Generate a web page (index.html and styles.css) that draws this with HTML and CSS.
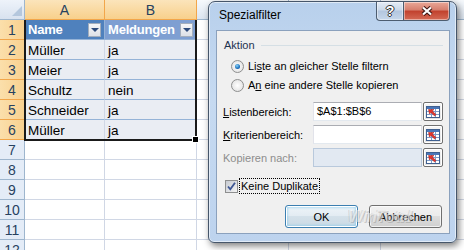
FILE: index.html
```html
<!DOCTYPE html>
<html lang="de">
<head>
    <meta charset="UTF-8">
    <title>Spezialfilter</title>
    <link rel="stylesheet" href="styles.css">
</head>
<body>
    <div class="sheet">
        <div class="corner"></div>
        <div class="ch on">A</div>
        <div class="ch on">B</div>
        <div class="ch">C</div>
        <div class="ch">D</div>
        <div class="ch">E</div>

        <div class="rh on">1</div>
        <div class="cell head">Name<span class="dd"></span></div>
        <div class="cell head shade">Meldungen<span class="dd"></span></div>
        <div class="cell"></div><div class="cell"></div><div class="cell"></div>

        <div class="rh on">2</div>
        <div class="cell data">Müller</div>
        <div class="cell data">ja</div>
        <div class="cell"></div><div class="cell"></div><div class="cell"></div>

        <div class="rh on">3</div>
        <div class="cell data">Meier</div>
        <div class="cell data">ja</div>
        <div class="cell"></div><div class="cell"></div><div class="cell"></div>

        <div class="rh on">4</div>
        <div class="cell data">Schultz</div>
        <div class="cell data">nein</div>
        <div class="cell"></div><div class="cell"></div><div class="cell"></div>

        <div class="rh on">5</div>
        <div class="cell data">Schneider</div>
        <div class="cell data">ja</div>
        <div class="cell"></div><div class="cell"></div><div class="cell"></div>

        <div class="rh on">6</div>
        <div class="cell data">Müller</div>
        <div class="cell data">ja</div>
        <div class="cell"></div><div class="cell"></div><div class="cell"></div>

        <div class="rh">7</div>
        <div class="cell"></div><div class="cell"></div><div class="cell"></div><div class="cell"></div><div class="cell"></div>
        <div class="rh">8</div>
        <div class="cell"></div><div class="cell"></div><div class="cell"></div><div class="cell"></div><div class="cell"></div>
        <div class="rh">9</div>
        <div class="cell"></div><div class="cell"></div><div class="cell"></div><div class="cell"></div><div class="cell"></div>
        <div class="rh">10</div>
        <div class="cell"></div><div class="cell"></div><div class="cell"></div><div class="cell"></div><div class="cell"></div>
        <div class="rh">11</div>
        <div class="cell"></div><div class="cell"></div><div class="cell"></div><div class="cell"></div><div class="cell"></div>
        <div class="rh">12</div>
        <div class="cell"></div><div class="cell"></div><div class="cell"></div><div class="cell"></div><div class="cell"></div>
    </div>

    <!-- selection border around A1:B6 -->
    <div class="sel"><span class="handle"></span></div>

    <div class="dialog">
        <div class="titlebar">
            <span class="title">Spezialfilter</span>
            <div class="tbtns">
                <span class="tb help">?</span>
                <span class="tb close">
                    <svg width="14" height="10" viewBox="0 0 14 10">
                        <path d="M3 1.5L11 8.5M11 1.5L3 8.5" stroke="#3b1511" stroke-width="4.2" fill="none"/>
                        <path d="M3 1.5L11 8.5M11 1.5L3 8.5" stroke="#fff" stroke-width="2.2" fill="none"/>
                    </svg>
                </span>
            </div>
        </div>

        <div class="panel">
            <div class="group"><span>Aktion</span><span class="line"></span></div>

            <div class="radio first"><span class="rb on"></span><span>Li<u>s</u>te an gleicher Stelle filtern</span></div>
            <div class="radio"><span class="rb"></span><span>A<u>n</u> eine andere Stelle kopieren</span></div>

            <div class="field first">
                <span class="lbl"><u>L</u>istenbereich:</span>
                <span class="inp">$A$1:$B$6</span>
                <span class="pick">
                    <svg width="14" height="12" viewBox="0 0 14 12">
                        <rect x="0.5" y="0.5" width="13" height="11" fill="#fff" stroke="#3f5f8f"/>
                        <rect x="1" y="1" width="12" height="2" fill="#4a76b8"/>
                        <path d="M1 5.5H13M1 8.5H13M5.5 3V11M9.5 3V11" stroke="#7d9bc7" fill="none"/>
                        <path d="M2.5 3.5H8L6.4 5.1L10 8.6L8.6 10L5 6.5L3.5 8Z" fill="#e2332b" stroke="#a01a14" stroke-width="0.5"/>
                    </svg>
                </span>
            </div>
            <div class="field">
                <span class="lbl"><u>K</u>riterienbereich:</span>
                <span class="inp"></span>
                <span class="pick">
                    <svg width="14" height="12" viewBox="0 0 14 12">
                        <rect x="0.5" y="0.5" width="13" height="11" fill="#fff" stroke="#3f5f8f"/>
                        <rect x="1" y="1" width="12" height="2" fill="#4a76b8"/>
                        <path d="M1 5.5H13M1 8.5H13M5.5 3V11M9.5 3V11" stroke="#7d9bc7" fill="none"/>
                        <path d="M2.5 3.5H8L6.4 5.1L10 8.6L8.6 10L5 6.5L3.5 8Z" fill="#e2332b" stroke="#a01a14" stroke-width="0.5"/>
                    </svg>
                </span>
            </div>
            <div class="field off">
                <span class="lbl">Kopieren nach:</span>
                <span class="inp"></span>
                <span class="pick">
                    <svg width="14" height="12" viewBox="0 0 14 12">
                        <rect x="0.5" y="0.5" width="13" height="11" fill="#fff" stroke="#3f5f8f"/>
                        <rect x="1" y="1" width="12" height="2" fill="#4a76b8"/>
                        <path d="M1 5.5H13M1 8.5H13M5.5 3V11M9.5 3V11" stroke="#7d9bc7" fill="none"/>
                        <path d="M2.5 3.5H8L6.4 5.1L10 8.6L8.6 10L5 6.5L3.5 8Z" fill="#e2332b" stroke="#a01a14" stroke-width="0.5"/>
                    </svg>
                </span>
            </div>

            <div class="check">
                <span class="box">
                    <svg width="11" height="11" viewBox="0 0 11 11">
                        <path d="M2 5.5L4.3 8.3L9 1.8" stroke="#3d5694" stroke-width="1.8" fill="none"/>
                    </svg>
                </span>
                <span class="focus">Keine Duplikate</span>
            </div>

            <div class="buttons">
                <button class="btn def">OK</button>
                <button class="btn">Abbrechen</button>
            </div>
        </div>
    </div>

    <span class="mark">WinTotal</span>
</body>
</html>
```

FILE: styles.css
```css
body {
    margin: 0;
    width: 464px;
    height: 250px;
    overflow: hidden;
    position: relative;
    background: #fff;
    font-family: "Liberation Sans", Arial, sans-serif;
}

/* spreadsheet */
.sheet {
    display: grid;
    grid-template-columns: 25px 80px 92px 92px 92px 92px;
    grid-auto-rows: 20px;
    font-size: 13.5px;
}
.sheet > div {
    box-sizing: border-box;
    border-right: 1px solid #d0d7e5;
    border-bottom: 1px solid #d0d7e5;
    white-space: nowrap;
}
.corner {
    position: relative;
    background: linear-gradient(#eef3fa, #d8e2ef);
    border-color: #9eb6ce !important;
}
.corner::after {
    content: "";
    position: absolute;
    right: 2px;
    bottom: 3px;
    border-left: 10px solid transparent;
    border-bottom: 10px solid #b4c7dd;
}
.ch {
    background: linear-gradient(#f6f9fc, #dce5f0);
    border-color: #9eb6ce !important;
    text-align: center;
    line-height: 20px;
    font-size: 14px;
    color: #27415f;
}
.ch.on {
    background: linear-gradient(#fbe4bb, #f8d08b);
    border-color: #f2a64a !important;
}
.rh {
    background: #e4ecf7;
    border-color: #9eb6ce !important;
    text-align: center;
    line-height: 20px;
    font-size: 14px;
    color: #27415f;
}
.rh.on {
    background: linear-gradient(to right, #fbdfab, #f8d190);
    border-color: #f2a64a !important;
}
.head {
    display: flex;
    align-items: center;
    justify-content: space-between;
    padding: 0 3px;
    color: #fff;
    font-weight: bold;
    font-size: 13px;
    letter-spacing: -0.2px;
    background: #4f81bd;
    border-bottom-color: #95b3d7 !important;
    border-right-color: #95b3d7 !important;
}
.head.shade {
    background: #7e9fd2;
}
.dd {
    position: relative;
    flex: none;
    width: 13px;
    height: 14px;
    box-sizing: border-box;
    border: 1px solid #a3aebd;
    background: linear-gradient(#f5f6f8, #dde1e7);
}
.dd::after {
    content: "";
    position: absolute;
    left: 2px;
    top: 4px;
    border-left: 4px solid transparent;
    border-right: 4px solid transparent;
    border-top: 4px solid #2d4b7c;
}
.data {
    background: #eaedf3;
    border-bottom-color: #95b3d7 !important;
    padding-left: 3px;
    line-height: 21px;
}
.sel {
    position: absolute;
    left: 24px;
    top: 20px;
    width: 173px;
    height: 121px;
    box-sizing: border-box;
    border: 2px solid #1a1a1a;
    border-top: none;
}
.handle {
    position: absolute;
    right: -4px;
    bottom: -4px;
    width: 5px;
    height: 5px;
    background: #000;
    border: 1px solid #fff;
}

/* dialog */
.dialog {
    position: absolute;
    left: 208px;
    top: 1px;
    width: 249px;
    height: 242px;
    box-sizing: border-box;
    display: flex;
    flex-direction: column;
    padding: 0 6px 8px 7px;
    border: 1px solid #46566a;
    border-radius: 7px 7px 6px 6px;
    background: linear-gradient(#b8d0ec, #c6daf1 40%, #bdd3ee);
    box-shadow: 2px 3px 7px rgba(0, 0, 0, 0.5), inset 0 0 0 1px rgba(255, 255, 255, 0.55);
    font-size: 11px;
}
.titlebar {
    height: 28px;
    display: flex;
    justify-content: space-between;
    align-items: flex-start;
}
.title {
    margin: 6px 0 0 3px;
    font-size: 12px;
}
.tbtns {
    display: flex;
}
.tb {
    height: 19px;
    box-sizing: border-box;
    display: flex;
    align-items: center;
    justify-content: center;
    border: 1px solid #4d5d70;
    border-top: none;
    box-shadow: inset 0 0 0 1px rgba(255, 255, 255, 0.45);
}
.help {
    width: 27px;
    border-right: none;
    border-radius: 0 0 0 4px;
    background: linear-gradient(#e4ecf6, #cad8e9 45%, #b3c6de 50%, #c6d7eb);
    color: #fff;
    font-weight: bold;
    font-size: 14px;
    text-shadow: 1px 0 0 #333, -1px 0 0 #333, 0 1px 0 #333, 0 -1px 0 #333;
}
.close {
    width: 47px;
    border-radius: 0 0 4px 0;
    background: linear-gradient(#e9a898, #d67e6d 45%, #c1412d 50%, #d46a55);
}
.panel {
    flex: 1;
    display: flex;
    flex-direction: column;
    padding: 7px 6px 0 7px;
    background: #f0f0f0;
    border: 1px solid #8ba1bd;
}
.group {
    display: flex;
    align-items: center;
    height: 14px;
    color: #1e3250;
}
.group .line {
    flex: 1;
    height: 1px;
    margin-left: 6px;
    background: #d5dfe5;
}
.radio {
    display: flex;
    align-items: center;
    height: 16px;
    margin: 3px 0 0 7px;
}
.radio.first {
    margin-top: 6px;
}
.rb {
    position: relative;
    width: 13px;
    height: 13px;
    box-sizing: border-box;
    margin-right: 4px;
    border: 1px solid #8e8f8f;
    border-radius: 50%;
    background: radial-gradient(circle, #fff, #dcdcdc);
}
.rb.on::after {
    content: "";
    position: absolute;
    left: 3px;
    top: 3px;
    width: 5px;
    height: 5px;
    border-radius: 50%;
    background: radial-gradient(circle at 40% 35%, #8ad4f7, #1a6ebd 60%, #0d3c75);
}
.field {
    display: flex;
    align-items: center;
    height: 19px;
    margin-top: 4px;
}
.field.first {
    margin-top: 9px;
}
.lbl {
    width: 90px;
    margin-left: -1px;
}
.inp {
    width: 109px;
    height: 19px;
    box-sizing: border-box;
    padding-left: 3px;
    line-height: 17px;
    background: #fff;
    border: 1px solid;
    border-color: #abadb3 #dbdfe6 #e3e9ef #e2e3ea;
}
.pick {
    width: 20px;
    height: 19px;
    margin-left: 1px;
    box-sizing: border-box;
    display: flex;
    align-items: center;
    justify-content: center;
    border: 1px solid #707070;
    border-radius: 2px;
    background: linear-gradient(#f6f6f6, #e1e1e1);
    box-shadow: inset 0 0 0 1px #fff;
}
.field.off .lbl {
    color: #8d8d8d;
}
.field.off .inp {
    background: #e2e9f2;
    border-color: #b9c9dc;
}
.check {
    display: flex;
    align-items: center;
    height: 16px;
    margin: 11px 0 0 1px;
}
.box {
    width: 13px;
    height: 13px;
    box-sizing: border-box;
    margin-right: 1px;
    display: flex;
    align-items: center;
    justify-content: center;
    border: 1px solid #8e8f8f;
    background: linear-gradient(135deg, #c6cad1, #f4f4f4);
}
.focus {
    border: 1px dotted #000;
    padding: 0 1px;
    line-height: 14px;
}
.buttons {
    display: flex;
    justify-content: flex-end;
    gap: 11px;
    margin: 11px 1px 0 0;
}
.btn {
    width: 73px;
    height: 23px;
    padding: 0;
    font: 11px "Liberation Sans", Arial, sans-serif;
    color: #000;
    border: 1px solid #707070;
    border-radius: 3px;
    background: linear-gradient(#f2f2f2, #ebebeb 50%, #dddddd 50%, #cfcfcf);
    box-shadow: inset 0 0 0 1px rgba(255, 255, 255, 0.7);
}
.btn.def {
    border-color: #3c7fb1;
    background: linear-gradient(#eef4f8, #e2ebf2 50%, #d4e1ea 50%, #cbd9e4);
    box-shadow: inset 0 0 0 1px #fff, inset 0 0 3px 1px #76c6ee;
}
.mark {
    position: absolute;
    left: 348px;
    top: 207px;
    font: italic bold 17px "Liberation Sans", Arial, sans-serif;
    letter-spacing: -1px;
    color: rgba(255, 255, 255, 0.6);
    text-shadow: 1px 1px 0 rgba(110, 110, 110, 0.35), -1px 0 0 rgba(140, 140, 140, 0.3);
    opacity: 0.8;
}
```
